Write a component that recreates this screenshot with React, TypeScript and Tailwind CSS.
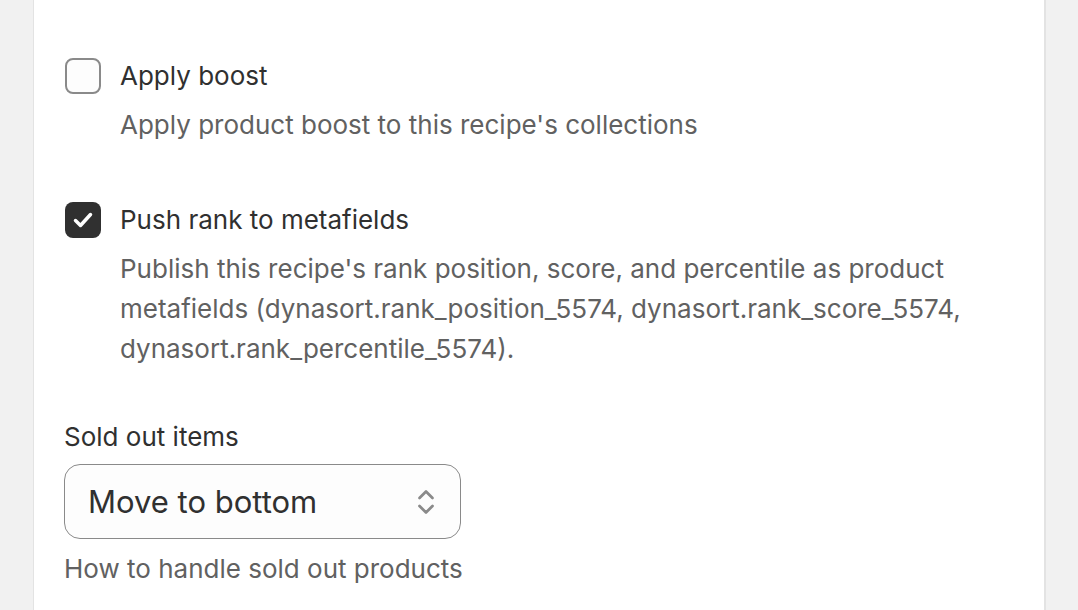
import React from "react";

function Chevrons() {
  return (
    <svg width="20" height="32" viewBox="0 0 20 32" fill="none">
      <path d="M3.5 12 L10 5.5 L16.5 12" stroke="#8a8a8a" strokeWidth="2.75" strokeLinecap="round" strokeLinejoin="round" />
      <path d="M3.5 20 L10 26.5 L16.5 20" stroke="#8a8a8a" strokeWidth="2.75" strokeLinecap="round" strokeLinejoin="round" />
    </svg>
  );
}

export default function App() {
  return (
    <div
      className="flex h-[610px] w-[1078px] overflow-hidden bg-[#f1f1f1] text-[#303030]"
      style={{ fontFamily: "Inter, 'Liberation Sans', sans-serif" }}
    >
      <div className="ml-[33px] flex h-full w-[1013px] flex-col border-l border-r-2 border-[#e3e3e3] bg-white pl-[31px] pt-[56px]">
        {/* Apply boost */}
        <div className="flex items-start gap-[19px]">
          <div className="mt-[2px] h-[36px] w-[36px] shrink-0 rounded-[8px] border-2 border-[#8a8a8a] bg-[#fdfdfd]" />
          <div className="flex flex-col">
            <span className="text-[26px] leading-[40px]">Apply boost</span>
            <span className="mt-[9px] text-[26px] leading-[40px] text-[#616161]">
              Apply product boost to this recipe's collections
            </span>
          </div>
        </div>

        {/* Push rank */}
        <div className="mt-[55px] flex items-start gap-[19px]">
          <div className="mt-[2px] flex h-[36px] w-[36px] shrink-0 items-center justify-center rounded-[8px] bg-[#303030]">
            <svg width="36" height="36" viewBox="0 0 36 36" fill="none">
              <path d="M10.5 18.5 L15.5 23.5 L25.5 12.5" stroke="white" strokeWidth="3.5" strokeLinecap="round" strokeLinejoin="round" />
            </svg>
          </div>
          <div className="flex w-[870px] flex-col">
            <span className="text-[26px] leading-[40px]">Push rank to metafields</span>
            <span className="mt-[9px] text-[26px] leading-[40px] text-[#616161]">
              Publish this recipe's rank position, score, and percentile as product metafields
              (dynasort.rank_position_5574, dynasort.rank_score_5574, dynasort.rank_percentile_5574).
            </span>
          </div>
        </div>

        {/* Sold out items */}
        <div className="mt-[48px] flex flex-col">
          <span className="-ml-px text-[26px] leading-[40px]">Sold out items</span>
          <div className="-ml-px mt-[7px] flex h-[75px] w-[397px] items-center justify-between rounded-[16px] border border-[#8a8a8a] bg-[#fdfdfd] pl-[23px] pr-[24px]">
            <span className="text-[31px] leading-[40px] text-[#303030]">Move to bottom</span>
            <Chevrons />
          </div>
          <span className="-ml-px mt-[10px] text-[26px] leading-[40px] text-[#616161]">
            How to handle sold out products
          </span>
        </div>
      </div>
    </div>
  );
}
